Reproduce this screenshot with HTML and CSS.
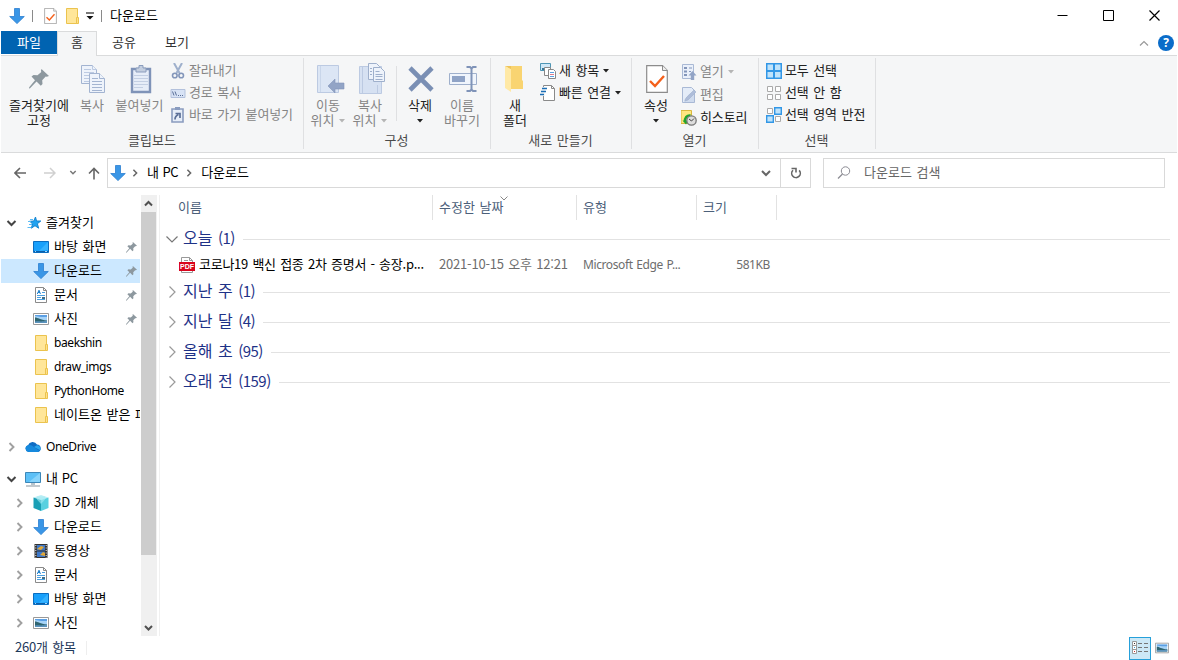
FILE: index.html
```html
<!DOCTYPE html>
<html lang="ko">
  <head>
    <meta charset="UTF-8" />
    <meta name="viewport" content="width=device-width, initial-scale=1.0" />
    <title>다운로드</title>
    <link rel="stylesheet" href="styles.css" />
  </head>
  <body>
    <!-- shared icons -->
    <svg class="sprite">
      <symbol id="i-down" viewBox="0 0 16 16">
        <path d="M5.5.5h5v8h4.8L8 15.6.7 8.500h4.800z" fill="#3a96e6" stroke="#2b7fd0" stroke-width=".8" />
      </symbol>
      <symbol id="i-folder" viewBox="0 0 16 16">
        <path d="M2.500.500h11v15h-11z" fill="#ffe699" stroke="#ebc34e" />
        <path d="M12.500 9.500h2v6h-2z" fill="#ffe08a" stroke="#ebc34e" />
      </symbol>
      <symbol id="i-pin" viewBox="0 0 20 20">
        <path d="M12.500 0 20 7l-2.200.8-1.100-.3-3.500 3.800.3 3.700-1.700 1.700-4.300-4.300L.8 19.400 0 19.300l.2-1L6 11.200 2.500 7.500l2-1.500 4 .3 3.800-3.300-.4-1.300z" fill="#8d989f" />
      </symbol>
      <symbol id="i-desktop" viewBox="0 0 16 16">
        <path d="M.5 2.500h15v11H.5z" fill="#18a0fb" stroke="#0a6dc0" />
        <path d="M15 3v8L6 12z" fill="#35b2ff" />
        <path d="M1 12.500h14" stroke="#0b5ea8" />
        <path d="M2 12.500h1m9 0h2" stroke="#9fd6ff" />
      </symbol>
      <symbol id="i-doc" viewBox="0 0 16 16">
        <path d="M2.500.500h8l3 3v12h-11z" fill="#fff" stroke="#8a8a8a" />
        <path d="M10.500.500v3h3" fill="none" stroke="#8a8a8a" />
        <path d="M4 8.500h8M4 10.500h4M4 12.500h8M9 5.500h3" stroke="#4a9fe0" />
        <path d="M4.300 7 6 3.200 7.400 7M5 5.500h2" fill="none" stroke="#1f80cc" />
        <path d="M9 10h3v2H9z" fill="#3f6d86" />
      </symbol>
      <symbol id="i-pic" viewBox="0 0 16 16">
        <path d="M.5 2.500h15v11H.5z" fill="#fff" stroke="#999" />
        <path d="M2 4h12v8H2z" fill="#a6d3f7" />
        <path d="M2 4h12v2L8 6 2 5z" fill="#5b9fe4" />
        <path d="M2 6.500c3 0 5 2.500 12 3V12H2z" fill="#2f6570" />
        <path d="M2 10.500c4-.5 6 .5 12-.7V12H2z" fill="#5b93bd" />
      </symbol>
      <symbol id="i-right" viewBox="0 0 10 10">
        <path d="M3 1l4 4-4 4" fill="none" stroke="currentColor" stroke-width="1.900" />
      </symbol>
      <symbol id="i-open" viewBox="0 0 10 10">
        <path d="M1 3l4 4 4-4" fill="none" stroke="currentColor" stroke-width="2" />
      </symbol>
      <symbol id="i-caret" viewBox="0 0 6 4">
        <path d="M0 0h6L3 3.400z" fill="currentColor" />
      </symbol>
      <symbol id="i-check" viewBox="0 0 22 28">
        <path d="M.7.700h15.800l4.800 4.800v21.800H.7z" fill="#fff" stroke="#8c8c8c" stroke-width="1.200" />
        <path d="M16.500.700v4.800h4.800" fill="#eee" stroke="#8c8c8c" />
        <path d="M4 16l5 5 9-10" fill="none" stroke="#f4601b" stroke-width="2.400" />
      </symbol>
      <symbol id="i-thin" viewBox="0 0 12 12">
        <path d="M3.500.500L9 6l-5.500 5.500" fill="none" stroke="#9a9a9a" stroke-width="1.200" />
      </symbol>
    </svg>

    <div class="window">
      <header class="titlebar">
        <svg class="ic"><use href="#i-down" /></svg>
        <span class="tbar-sep"></span>
        <svg class="ic-props"><use href="#i-check" /></svg>
        <svg class="ic"><use href="#i-folder" /></svg>
        <svg class="customize" viewBox="0 0 8 8"><path d="M0 1h8" stroke="#222" stroke-width="1.200" /><path d="M.5 4h7L4 7.500z" fill="#111" /></svg>
        <span class="tbar-sep"></span>
        <span class="title">다운로드</span>
        <div class="winbtns">
          <svg viewBox="0 0 11 11"><path d="M.5 5.500h10" stroke="#000" /></svg>
          <svg viewBox="0 0 11 11"><path d="M.5.500h10v10H.5z" fill="none" stroke="#000" /></svg>
          <svg viewBox="0 0 11 11"><path d="M.5.500l10 10M10.500.500l-10 10" stroke="#000" stroke-width="1.200" /></svg>
        </div>
      </header>

      <nav class="tabs">
        <div class="tab tab-file">파일</div>
        <div class="tab tab-home">홈</div>
        <div class="tab tab-share">공유</div>
        <div class="tab tab-view">보기</div>
        <div class="tabs-right">
          <svg class="collapse" viewBox="0 0 10 6"><path d="M1 5.500l4-4 4 4" fill="none" stroke="#999" stroke-width="1.200" /></svg>
          <span class="help">?</span>
        </div>
      </nav>

      <section class="ribbon">
        <div class="group g-clip">
          <div class="group-body">
            <div class="big w66">
              <div class="big-ic"><svg class="pin-big"><use href="#i-pin" /></svg></div>
              <span>즐겨찾기에<br />고정</span>
            </div>
            <div class="big w40 off">
              <div class="big-ic nudge">
                <svg width="24" height="28" viewBox="0 0 24 28">
                  <g fill="#eef3fb" stroke="#a3b4d1">
                    <path d="M.5.500h11l4 4v14H.5z" />
                    <path d="M11.500.500v4h4M3 4.500h7M3 7.500h10M3 10.500h6M3 13.500h6M3 16.500h6" stroke="#bccae2" />
                    <path d="M8.500 8.500h10l5 5v14h-15z" />
                    <path d="M18.500 8.500v5h5" />
                    <path d="M11 13.500h6M11 16.500h10M11 19.500h10M11 22.500h10M11 25.500h10" />
                  </g>
                </svg>
              </div>
              <span>복사</span>
            </div>
            <div class="big w55 off">
              <div class="big-ic nudge">
                <svg width="22" height="30" viewBox="0 0 22 30">
                  <path d="M2 5h18v23H2z" fill="#e6edf8" stroke="#7f93b8" stroke-width="2.400" />
                  <path d="M6 4h3V1.500h4V4h3v4H6z" fill="#c3cedf" stroke="#8b9dbd" />
                  <path d="M4 11.500h14M4 14.500h14M4 17.500h14M4 20.500h14M4 23.500h9" stroke="#c3cfe3" />
                </svg>
              </div>
              <span>붙여넣기</span>
            </div>
            <div class="smalls">
              <div class="small off">
                <svg class="ic" viewBox="0 0 16 16"><path d="M4 0l5.500 10M12 0L6.500 10" stroke="#9fb0cc" stroke-width="2" /><g fill="none" stroke="#8396ba" stroke-width="1.600"><circle cx="4.800" cy="12.500" r="2.300" /><circle cx="11.200" cy="12.500" r="2.300" /></g></svg>
                <span>잘라내기</span>
              </div>
              <div class="small off">
                <svg class="ic" viewBox="0 0 16 16"><path d="M1 4.500h14v8H1z" fill="#d8e3f5" stroke="#b3c1dc" /><path d="M2.500 6.500l1.500 4M5 6.500l1.500 4M8 10.500h1m1 0h1m1 0h1" stroke="#5b6f97" fill="none" /></svg>
                <span>경로 복사</span>
              </div>
              <div class="small off">
                <svg class="ic" viewBox="0 0 16 16"><path d="M2 2h11v13H2z" fill="#e6edf8" stroke="#8a9cbf" stroke-width="1.600" /><path d="M5 0h5v3H5z" fill="#8a9cbf" /><path d="M5 12.500c0-3 1-4 3.500-5M5.500 6.500h4.500v4.500" fill="none" stroke="#5b6f97" stroke-width="1.700" /></svg>
                <span>바로 가기 붙여넣기</span>
              </div>
            </div>
          </div>
          <div class="group-name">클립보드</div>
        </div>

        <div class="group g-org">
          <div class="group-body">
            <div class="big w42 off">
              <div class="big-ic nudge-more">
                <svg width="30" height="30" viewBox="0 0 30 30"><path d="M2.500 1.500h21v27h-21z" fill="#dce6f5" stroke="#bccae2" /><path d="M5.500 2v26" stroke="#c9d6ea" /><path d="M13 22l7-7v4h9v6h-9v4z" fill="#92a4c6" stroke="#8396ba" stroke-width=".6" /></svg>
              </div>
              <span>이동<br />위치<svg class="caret"><use href="#i-caret" /></svg></span>
            </div>
            <div class="big w42 off">
              <div class="big-ic nudge-more">
                <svg width="30" height="32" viewBox="0 0 30 32"><path d="M2.500 3.500h22v27h-22z" fill="#d6e1f2" stroke="#bccae2" /><path d="M5.500 4v26M20.500 22v8" stroke="#bccae2" /><g fill="#eef3fb" stroke="#9fb0cc"><path d="M11.500.500h8l3 3v13h-11z" /><path d="M16.500 4.500h7l4 4v10h-11z" /><path d="M13 5.500h2M13 8.500h2M13 11.500h2M18.500 8.500h4M18.500 11.500h7M18.500 13.500h7M18.500 16.500h7" /></g></svg>
              </div>
              <span>복사<br />위치<svg class="caret"><use href="#i-caret" /></svg></span>
            </div>
            <div class="inner-sep"></div>
            <div class="big w42">
              <div class="big-ic nudge">
                <svg width="26" height="26" viewBox="0 0 26 26"><path d="M2 2l22 22M24 2L2 24" stroke="#7a8fb4" stroke-width="4.600" /></svg>
              </div>
              <span>삭제<br /><svg class="caret mid"><use href="#i-caret" /></svg></span>
            </div>
            <div class="big w42 off">
              <div class="big-ic">
                <svg class="rename" width="28" height="28" viewBox="0 0 28 28"><path d="M.5 8.500h27v11H.5z" fill="#f0f5fc" stroke="#9fb0cc" /><path d="M3 11h13v6H3z" fill="#8fa3c6" /><path d="M17.500 2h3.500l1.500 1.500L24 2h3.500M22.500 3v22M17.500 26H21l1.500-1.500L24 26h3.500" fill="none" stroke="#7f93b8" stroke-width="2" /></svg>
              </div>
              <span>이름<br />바꾸기</span>
            </div>
          </div>
          <div class="group-name">구성</div>
        </div>

        <div class="group g-new">
          <div class="group-body">
            <div class="big w42">
              <div class="big-ic">
                <svg class="new-folder" width="20" height="28" viewBox="0 0 20 28"><path d="M4 1h14v14l1 1v8H4z" fill="#f9d471" /><path d="M1 1l6 3v23l-6-4z" fill="#ffe9a6" /><path d="M1 1h6v3z" fill="#eec45a" /></svg>
              </div>
              <span>새<br />폴더</span>
            </div>
            <div class="smalls">
              <div class="small">
                <svg class="ic" viewBox="0 0 16 16"><path d="M.5.500h10v7H.5z" fill="#cfe8f8" stroke="#4d95b5" /><path d="M2 5h7v2H2z" fill="#35789a" /><path d="M4.500 4.500h6v8h-6z" fill="#fff" stroke="#888" /><path d="M8.500 6.500h5l2 2v7h-7z" fill="#fff" stroke="#888" /><path d="M10 9.500h4" stroke="#5aa2df" /><path d="M10 11.500h4" stroke="#e07a8a" /><path d="M10 13.500h4" stroke="#5aa2df" /></svg>
                <span>새 항목</span><svg class="caret"><use href="#i-caret" /></svg>
              </div>
              <div class="small">
                <svg class="ic" viewBox="0 0 16 16"><path d="M3.500.500h8l3 3v12h-11z" fill="#fff" stroke="#8a8a8a" /><path d="M11.500.500v3h3" fill="none" stroke="#8a8a8a" /><path d="M3 2h2v9H3z" fill="#f5f6f7" /><path d="M2 3.500h5M1 6.500h5M0 9.500h4" stroke="#1b6eb5" stroke-width="1.300" /></svg>
                <span>빠른 연결</span><svg class="caret"><use href="#i-caret" /></svg>
              </div>
            </div>
          </div>
          <div class="group-name">새로 만들기</div>
        </div>

        <div class="group g-open">
          <div class="group-body">
            <div class="big w42">
              <div class="big-ic nudge"><svg width="22" height="28"><use href="#i-check" /></svg></div>
              <span>속성<br /><svg class="caret mid"><use href="#i-caret" /></svg></span>
            </div>
            <div class="smalls smalls-open">
              <div class="small off">
                <svg class="ic" viewBox="0 0 16 16"><path d="M1.500.500h11v14h-11z" fill="#eaf0fa" stroke="#a9b9d5" /><path d="M3 3h3v2H3zM3 6.500h3v2H3zM3 10h3v2H3z" fill="#8396ba" /><path d="M8 4h3M8 7.500h2" stroke="#8396ba" /><path d="M11.500 7l4 4.500h-2.300V16H9.800v-4.500H7.500z" fill="#92a4c6" /></svg>
                <span>열기</span><svg class="caret"><use href="#i-caret" /></svg>
              </div>
              <div class="small off">
                <svg class="ic" viewBox="0 0 16 16"><path d="M1.500.500h9l3 3v12h-12z" fill="#e4ecf8" stroke="#a9b9d5" /><path d="M3 13L8 7l5-2v10H3z" fill="#cfdbee" /><path d="M4 14l1-3 8-8 2 2-8 8z" fill="#aebdda" stroke="#9fb0cc" stroke-width=".6" /></svg>
                <span>편집</span>
              </div>
              <div class="small">
                <svg class="ic" viewBox="0 0 16 16"><path d="M0 .5h10.500v13H0z" fill="#ffe680" stroke="#d9b83e" /><path d="M9.500 5.500C6 5 3.500 7.500 4 12" fill="none" stroke="#21a52e" stroke-width="2.400" /><path d="M1.500 10.500h6L5 14.500z" fill="#21a52e" /><circle cx="10.500" cy="10.500" r="4.700" fill="#ddd" stroke="#777" stroke-width="1.300" /><path d="M8 9l2.500 2L13 8.500" fill="none" stroke="#444" /></svg>
                <span>히스토리</span>
              </div>
            </div>
          </div>
          <div class="group-name">열기</div>
        </div>

        <div class="group g-select">
          <div class="group-body">
            <div class="smalls">
              <div class="small">
                <svg class="ic" viewBox="0 0 16 16"><path d="M0 0h16v16H0z" fill="#3297e6" /><path d="M1.500 1.500h5.500v5.500H1.500zM9 1.500h5.500v5.500H9zM1.500 9h5.500v5.500H1.500zM9 9h5.500v5.500H9z" fill="#bfe3fb" /></svg>
                <span>모두 선택</span>
              </div>
              <div class="small">
                <svg class="ic" viewBox="0 0 16 16"><path d="M1.500 1.500h5v5h-5zM9.500 1.500h5v5h-5zM1.500 9.500h5v5h-5zM9.500 9.500h5v5h-5z" fill="#fff" stroke="#aaa" /></svg>
                <span>선택 안 함</span>
              </div>
              <div class="small">
                <svg class="ic" viewBox="0 0 16 16"><path d="M1.500 1.500h5v5h-5zM9.500 9.500h5v5h-5z" fill="#fff" stroke="#aaa" /><path d="M8.700.700h6.600v6.600H8.700zM.7 8.700h6.600v6.600H.7z" fill="#bfe3fb" stroke="#3297e6" stroke-width="1.400" /></svg>
                <span>선택 영역 반전</span>
              </div>
            </div>
          </div>
          <div class="group-name">선택</div>
        </div>
      </section>

      <section class="address">
        <svg class="arrow" viewBox="0 0 12 12"><path d="M12 6H1M6 1L1 6l5 5" fill="none" stroke="#666" stroke-width="1.600" /></svg>
        <svg class="arrow fwd" viewBox="0 0 12 12"><path d="M0 6h11M6 1l5 5-5 5" fill="none" stroke="#d0d0d0" stroke-width="1.500" /></svg>
        <svg class="recent" viewBox="0 0 8 8"><path d="M1.300 2L4 4.700l2.700-2.700" fill="none" stroke="#777" stroke-width="1.500" /></svg>
        <svg class="arrow up" viewBox="0 0 12 12"><path d="M6 12.500V1.500M1 6.500l5-5 5 5" fill="none" stroke="#666" stroke-width="1.600" /></svg>
        <div class="path">
          <svg class="ic"><use href="#i-down" /></svg>
          <svg class="crumb-sep"><use href="#i-right" /></svg>
          <span class="crumb-pc">내 PC</span>
          <svg class="crumb-sep"><use href="#i-right" /></svg>
          <span>다운로드</span>
          <svg class="path-drop"><use href="#i-open" /></svg>
          <div class="refresh">
            <svg viewBox="0 0 12 12"><path d="M3 3.200a4.300 4.300 0 1 0 6.200.2M1.500 1.500H6v4" fill="none" stroke="#666" stroke-width="1.600" /></svg>
          </div>
        </div>
        <div class="search">
          <svg viewBox="0 0 14 14"><circle cx="8.500" cy="5" r="4.200" fill="none" stroke="#8b8b93" /><path d="M5.500 8L1 12.500" stroke="#8b8b93" stroke-width="1.200" /></svg>
          <span>다운로드 검색</span>
        </div>
      </section>

      <main class="content">
        <aside class="tree">
          <div class="row root">
            <svg class="exp open"><use href="#i-open" /></svg>
            <svg class="ic" viewBox="0 0 16 16"><path d="M9.500 2l1 4h4.300l-3.400 2.700 1.200 4.500-3.600-2.500-3.700 2.500L6.600 9 3.800 6.300l4-.3z" fill="#21a3f1" stroke="#1685d0" /><path d="M4 4.500h3M2 6.500h3M3 9.500h3M1.500 12.500h4" stroke="#5cbcf5" /></svg>
            <span>즐겨찾기</span>
          </div>
          <div class="row"><svg class="ic"><use href="#i-desktop" /></svg><span>바탕 화면</span><svg class="pin"><use href="#i-pin" /></svg></div>
          <div class="row selected"><svg class="ic"><use href="#i-down" /></svg><span>다운로드</span><svg class="pin"><use href="#i-pin" /></svg></div>
          <div class="row"><svg class="ic"><use href="#i-doc" /></svg><span>문서</span><svg class="pin"><use href="#i-pin" /></svg></div>
          <div class="row"><svg class="ic"><use href="#i-pic" /></svg><span>사진</span><svg class="pin"><use href="#i-pin" /></svg></div>
          <div class="row"><svg class="ic"><use href="#i-folder" /></svg><span class="lat">baekshin</span></div>
          <div class="row"><svg class="ic"><use href="#i-folder" /></svg><span class="lat">draw_imgs</span></div>
          <div class="row"><svg class="ic"><use href="#i-folder" /></svg><span class="lat">PythonHome</span></div>
          <div class="row"><svg class="ic"><use href="#i-folder" /></svg><span>네이트온 받은 파일</span></div>

          <div class="row root spaced">
            <svg class="exp"><use href="#i-right" /></svg>
            <svg class="ic" viewBox="0 0 16 16"><path d="M3.500 13A3.500 3.500 0 0 1 3 6.200 5 5 0 0 1 12 5.500a3.800 3.800 0 0 1 .8 7.500z" fill="#0f6cc4" /><path d="M3.500 13A3.500 3.500 0 0 1 3 6.200c2-.8 4 0 5.500 1.500L14.500 12c-.5.600-1 1-2 1z" fill="#1689dd" /><path d="M12 6.300a3.600 3.600 0 0 1 3.300 5L9 8z" fill="#2aa5ec" /></svg>
            <span class="lat drive">OneDrive</span>
          </div>

          <div class="row root spaced">
            <svg class="exp open"><use href="#i-open" /></svg>
            <svg class="ic" viewBox="0 0 16 16"><path d="M.5 1.500h15v10H.5z" fill="#5cc0f7" stroke="#3c87b8" /><path d="M15 2v9L4 11z" fill="#86d3fb" /><path d="M6 12h4v2H6z" fill="#b8c4cc" /><path d="M1 15h14" stroke="#9aa5ae" stroke-width="1.200" /></svg>
            <span class="my-pc">내 PC</span>
          </div>
          <div class="row sub">
            <svg class="exp"><use href="#i-right" /></svg>
            <svg class="ic" viewBox="0 0 16 16"><path d="M8 0l7.500 2.500L8 5 .5 2.500z" fill="#bdeef5" /><path d="M.5 2.500L8 5v11L.5 13z" fill="#1a9fb5" /><path d="M15.500 2.500L8 5v11l7.500-3z" fill="#57d0e0" /><path d="M4 1.500h8v3L8 9 4 4.500z" fill="#a3ebf4" opacity=".6" /></svg>
            <span>3D 개체</span>
          </div>
          <div class="row sub"><svg class="exp"><use href="#i-right" /></svg><svg class="ic"><use href="#i-down" /></svg><span>다운로드</span></div>
          <div class="row sub">
            <svg class="exp"><use href="#i-right" /></svg>
            <svg class="ic" viewBox="0 0 16 16"><path d="M1.500 1h13v14h-13z" fill="#333" /><path d="M4 2h8v5.500H4zM4 8.500h8V14H4z" fill="#3d78c9" /><path d="M4 6l4-3 3 1-3 3zM7 12l3-3 2 1v3z" fill="#e2a736" /><path d="M2.800 2v13M13.200 2v13" stroke="#eee" stroke-dasharray="1 1.500" /></svg>
            <span>동영상</span>
          </div>
          <div class="row sub"><svg class="exp"><use href="#i-right" /></svg><svg class="ic"><use href="#i-doc" /></svg><span>문서</span></div>
          <div class="row sub"><svg class="exp"><use href="#i-right" /></svg><svg class="ic"><use href="#i-desktop" /></svg><span>바탕 화면</span></div>
          <div class="row sub"><svg class="exp"><use href="#i-right" /></svg><svg class="ic"><use href="#i-pic" /></svg><span>사진</span></div>
        </aside>

        <div class="scrollbar">
          <svg class="sb-btn" viewBox="0 0 16 17"><path d="M4 10.500L7.500 7l3.500 3.500" fill="none" stroke="#505050" stroke-width="2" /></svg>
          <div class="thumb"></div>
          <svg class="sb-btn sb-down" viewBox="0 0 16 17"><path d="M4 7l3.500 3.500L11 7" fill="none" stroke="#505050" stroke-width="2" /></svg>
        </div>

        <div class="files">
          <div class="cols">
            <div class="c-name">이름</div>
            <div class="c-date">수정한 날짜<svg class="sort" viewBox="0 0 8 5"><path d="M.5.500L4 4 7.500.500" fill="none" stroke="#888" /></svg></div>
            <div class="c-type">유형</div>
            <div class="c-size">크기</div>
          </div>

          <div class="section"><svg class="sec-open" viewBox="0 0 12 12"><path d="M.5 3.500L6 9l5.500-5.500" fill="none" stroke="#777" stroke-width="1.200" /></svg><span>오늘 <b>(1)</b></span></div>
          <div class="file">
            <div class="f-name">
              <svg class="ic" viewBox="0 0 16 16"><path d="M2.500 7V.5h8l3 3V7M2.500 13v2.500h11V13" fill="#fff" stroke="#999" /><path d="M10.500.500v3h3M5 3.500h4" fill="none" stroke="#999" /><path d="M0 5h16v9H0z" fill="#d9041c" /><text x="8" y="12.300" class="pdf" text-anchor="middle">PDF</text></svg>
              <span>코로나19 백신 접종 2차 증명서 - 송장.p...</span>
            </div>
            <div class="f-date">2021-10-15 오후 12:21</div>
            <div class="f-type lat">Microsoft Edge P...</div>
            <div class="f-size lat">581KB</div>
          </div>
          <div class="section"><svg><use href="#i-thin" /></svg><span>지난 주 <b>(1)</b></span></div>
          <div class="section"><svg><use href="#i-thin" /></svg><span>지난 달 <b>(4)</b></span></div>
          <div class="section"><svg><use href="#i-thin" /></svg><span>올해 초 <b>(95)</b></span></div>
          <div class="section"><svg><use href="#i-thin" /></svg><span>오래 전 <b>(159)</b></span></div>
        </div>
      </main>

      <footer class="status">
        <span class="count">260개 항목</span>
        <div class="views">
          <div class="view-on">
            <svg viewBox="0 0 16 14"><path d="M.5.500h4v12h-4zM.5 4.500h4M.5 8.500h4" fill="#fff" stroke="#999" /><path d="M2 2.500h1" stroke="#333" /><path d="M2 6.500h1" stroke="#39c" /><path d="M2 10.500h1" stroke="#c33" /><path d="M6 2.500h4m2 0h4M6 6.500h4m2 0h4M6 10.500h4m2 0h4" stroke="#777" /></svg>
          </div>
          <svg class="view-pic"><use href="#i-pic" /></svg>
        </div>
      </footer>
    </div>
  </body>
</html>
```
FILE: styles.css
```css
* {
  box-sizing: border-box;
}
body {
  margin: 0;
  overflow: hidden;
  background: #fff;
  color: #000;
  font-family: "Noto Sans CJK KR", sans-serif;
  font-size: 13px;
  line-height: 16px;
  word-spacing: 1px;
  white-space: nowrap;
}
svg {
  display: block;
  flex: none;
}
.sprite {
  display: none;
}
.window {
  width: 1177px;
  height: 660px;
  padding-left: 1px;
  display: flex;
  flex-direction: column;
}
.ic {
  width: 16px;
  height: 16px;
}
.caret {
  display: inline-block;
  width: 6px;
  height: 4px;
  margin-left: 5px;
  vertical-align: 2px;
}
.off .caret {
  color: #b5b5b5;
}
.lat {
  font-family: "Noto Sans", sans-serif;
  font-size: 12px;
  letter-spacing: -0.4px;
}

/* title bar */
.titlebar {
  height: 31px;
  display: flex;
  align-items: center;
  padding-left: 8px;
}
.tbar-sep {
  width: 1px;
  height: 12px;
  background: #8a8a8a;
  margin: 0 11px 0 7px;
}
.ic-props {
  width: 13px;
  height: 16px;
  margin-right: 7px;
}
.customize {
  width: 8px;
  height: 8px;
  margin-left: 6px;
}
.customize + .tbar-sep {
  margin-right: 8px;
}
.title {
  margin-top: -2px;
}
.winbtns {
  margin-left: auto;
  display: flex;
  gap: 35px;
  padding-right: 17px;
}
.winbtns svg {
  width: 11px;
  height: 11px;
}

/* tabs */
.tabs {
  height: 25px;
  display: flex;
  border-bottom: 1px solid #dadbdc;
}
.tab {
  height: 23px;
  line-height: 22px;
  text-align: center;
  color: #333;
}
.tab-file {
  width: 56px;
  background: #0063b1;
  color: #fff;
}
.tab-home {
  width: 40px;
  height: 25px;
  background: #f5f6f7;
  border: 1px solid #dadbdc;
  border-bottom: none;
  line-height: 20px;
}
.tab-share {
  width: 54px;
}
.tab-view {
  width: 52px;
}
.tabs-right {
  margin-left: auto;
  display: flex;
  align-items: center;
  gap: 9px;
  padding-right: 3px;
}
.collapse {
  width: 10px;
  height: 6px;
}
.help {
  width: 16px;
  height: 16px;
  border-radius: 50%;
  background: #0a6cc9;
  color: #fff;
  font: bold 12px/16px "Noto Sans", sans-serif;
  text-align: center;
}

/* ribbon */
.ribbon {
  height: 97px;
  display: flex;
  background: #f5f6f7;
  border-bottom: 1px solid #dadbdc;
  color: #222;
}
.group {
  height: 91px;
  margin-top: 2px;
  border-right: 1px solid #dfe0e2;
  display: flex;
  flex-direction: column;
}
.group-body {
  height: 74px;
  display: flex;
}
.group-name {
  text-align: center;
  line-height: 19px;
  padding-right: 1px;
  color: #4a4a4a;
}
.g-clip {
  width: 303px;
  padding-left: 5px;
}
.g-clip .group-name {
  margin-left: -5px;
  padding-right: 0;
}
.g-org {
  width: 187px;
}
.g-new {
  width: 141px;
}
.g-open {
  width: 127px;
}
.g-select {
  width: 117px;
}
.g-org .group-body,
.g-new .group-body,
.g-open .group-body {
  padding-left: 3px;
}
.g-select .group-body {
  padding-left: 4px;
}
.big {
  display: flex;
  flex-direction: column;
  align-items: center;
  text-align: center;
  line-height: 15px;
}
.big-ic {
  height: 32px;
  margin: 5px 0 2px;
  display: flex;
  align-items: center;
}
.nudge {
  padding-left: 2px;
}
.nudge-more {
  padding-left: 4px;
}
.off {
  color: #858585;
}
.w66 {
  width: 66px;
}
.w40 {
  width: 40px;
}
.w55 {
  width: 55px;
}
.w42 {
  width: 42px;
}
.pin-big {
  width: 20px;
  height: 20px;
}
.caret.mid {
  margin-left: 0;
}
.rename {
  margin-left: 2px;
}
.new-folder {
  margin-right: 2px;
}
.inner-sep {
  width: 1px;
  height: 55px;
  margin: 8px 2px 0 5px;
  background: #dfe0e2;
}
.smalls {
  display: flex;
  flex-direction: column;
  padding: 2px 0 0 3px;
}
.small {
  height: 22px;
  display: flex;
  align-items: center;
  gap: 3px;
}
.small span {
  margin-top: -2px;
  letter-spacing: -0.1px;
}
.small .caret {
  margin-left: 1px;
}
.g-new .smalls {
  padding-left: 4px;
}
.smalls-open {
  padding: 2px 0 0 4px;
}
.smalls-open .small {
  height: 23px;
}

/* address bar */
.address {
  height: 42px;
  display: flex;
  align-items: center;
  padding: 0 12px 2px 13px;
}
.address span {
  margin-top: -2px;
}
.arrow {
  width: 12px;
  height: 12px;
}
.fwd {
  margin-left: 18px;
}
.recent {
  width: 8px;
  height: 8px;
  margin: 0 11px 0 13px;
}
.up {
  overflow: visible;
}
.path {
  width: 704px;
  height: 30px;
  margin-left: 7px;
  border: 1px solid #d9d9d9;
  display: flex;
  align-items: center;
  padding-left: 2px;
}
.crumb-sep {
  width: 8px;
  height: 8px;
  margin: 0 8px 0 5px;
  color: #666;
}
.crumb-pc {
  letter-spacing: -0.5px;
}
.crumb-pc + .crumb-sep {
  margin-left: 7px;
}
.path-drop {
  width: 10px;
  height: 10px;
  margin-left: auto;
  margin-right: 9px;
  color: #666;
}
.refresh {
  width: 30px;
  height: 28px;
  border-left: 1px solid #d9d9d9;
  display: flex;
  align-items: center;
  justify-content: center;
}
.refresh svg {
  width: 12px;
  height: 12px;
}
.search {
  width: 342px;
  height: 30px;
  margin-left: 12px;
  border: 1px solid #d9d9d9;
  display: flex;
  align-items: center;
  padding-left: 13px;
  gap: 13px;
  color: #666;
}
.search svg {
  width: 14px;
  height: 14px;
}

/* navigation tree */
.content {
  height: 441px;
  display: flex;
}
.tree {
  width: 140px;
  padding-top: 16px;
  overflow: hidden;
}
.row {
  height: 24px;
  width: 139px;
  display: flex;
  align-items: center;
  padding-left: 32px;
  gap: 5px;
  overflow: hidden;
}
.row span {
  margin-top: -2px;
}
.row .lat {
  margin-top: 0;
}
.row.root {
  padding-left: 5px;
  gap: 4px;
}
.row.sub {
  padding-left: 13px;
}
.row.spaced {
  margin-top: 8px;
}
.exp {
  width: 11px;
  height: 10px;
  margin-right: 4px;
  color: #a0a0a0;
}
.row.sub .exp {
  margin-right: 3px;
}
.row:first-child .exp {
  margin-right: 5px;
}
.row .drive,
.row .my-pc {
  margin-left: 1px;
}
.my-pc {
  letter-spacing: -0.4px;
}
.exp.open {
  color: #444;
}
.selected {
  background: #cce8ff;
}
.pin {
  width: 11px;
  height: 11px;
  margin-left: auto;
  margin-right: 3px;
}
.scrollbar {
  width: 16px;
  background: #f0f0f0;
  display: flex;
  flex-direction: column;
}
.sb-btn {
  width: 16px;
  height: 17px;
}
.sb-down {
  margin-top: auto;
}
.thumb {
  width: 15px;
  height: 343px;
  background: #cdcdcd;
}

/* file list */
.files {
  width: 1011px;
  margin-left: 2px;
  border-left: 1px solid #f0f0f0;
}
.cols {
  height: 25px;
  margin-bottom: 4px;
  display: flex;
  line-height: 24px;
  color: #4c607a;
}
.cols div {
  padding-left: 6px;
  border-right: 1px solid #e2e2e2;
}
.cols .c-name {
  width: 273px;
  padding-left: 18px;
}
.c-date {
  width: 144px;
  position: relative;
}
.sort {
  position: absolute;
  left: 67px;
  top: 1px;
  width: 8px;
  height: 5px;
}
.c-type {
  width: 120px;
}
.c-size {
  width: 80px;
}
.section {
  height: 30px;
  display: flex;
  align-items: center;
  padding-left: 6px;
  font-size: 16px;
  color: #1e3287;
}
.section svg {
  width: 12px;
  height: 12px;
  margin-right: 5px;
}
.section span {
  margin-top: -3px;
}
.section b {
  font-weight: normal;
  font-size: 15px;
  letter-spacing: -0.5px;
}
.section::after {
  content: "";
  flex: 1;
  height: 1px;
  margin: 1px 0 0 8px;
  background: #e2e2e2;
}
.file {
  height: 23px;
  display: flex;
  align-items: center;
  color: #6d6d6d;
}
.file div,
.f-name span {
  margin-top: -1px;
}
.file .f-date,
.f-name span {
  margin-top: -3px;
}
.f-name {
  width: 279px;
  padding-left: 19px;
  display: flex;
  align-items: center;
  gap: 4px;
  color: #000;
  letter-spacing: -0.26px;
}
.f-date {
  width: 144px;
  letter-spacing: -0.2px;
}
.f-type {
  width: 120px;
}
.f-size {
  width: 67px;
  text-align: right;
}
.pdf {
  font: bold 7px "Liberation Sans", sans-serif;
  letter-spacing: 0;
  fill: #fff;
}

/* status bar */
.status {
  height: 24px;
  display: flex;
  align-items: center;
  color: #1e395b;
}
.count {
  height: 14px;
  line-height: 11px;
  width: 86px;
  padding-left: 14px;
  border-right: 1px solid #eee;
  letter-spacing: -0.2px;
}
.views {
  margin-left: auto;
  display: flex;
  align-items: center;
  gap: 4px;
  padding-right: 8px;
}
.view-on {
  width: 22px;
  height: 23px;
  background: #cce8f6;
  border: 1px solid #26a0da;
  display: flex;
  align-items: center;
  justify-content: center;
}
.view-on svg {
  width: 16px;
  height: 14px;
}
.view-pic {
  width: 14px;
  height: 14px;
}
```
